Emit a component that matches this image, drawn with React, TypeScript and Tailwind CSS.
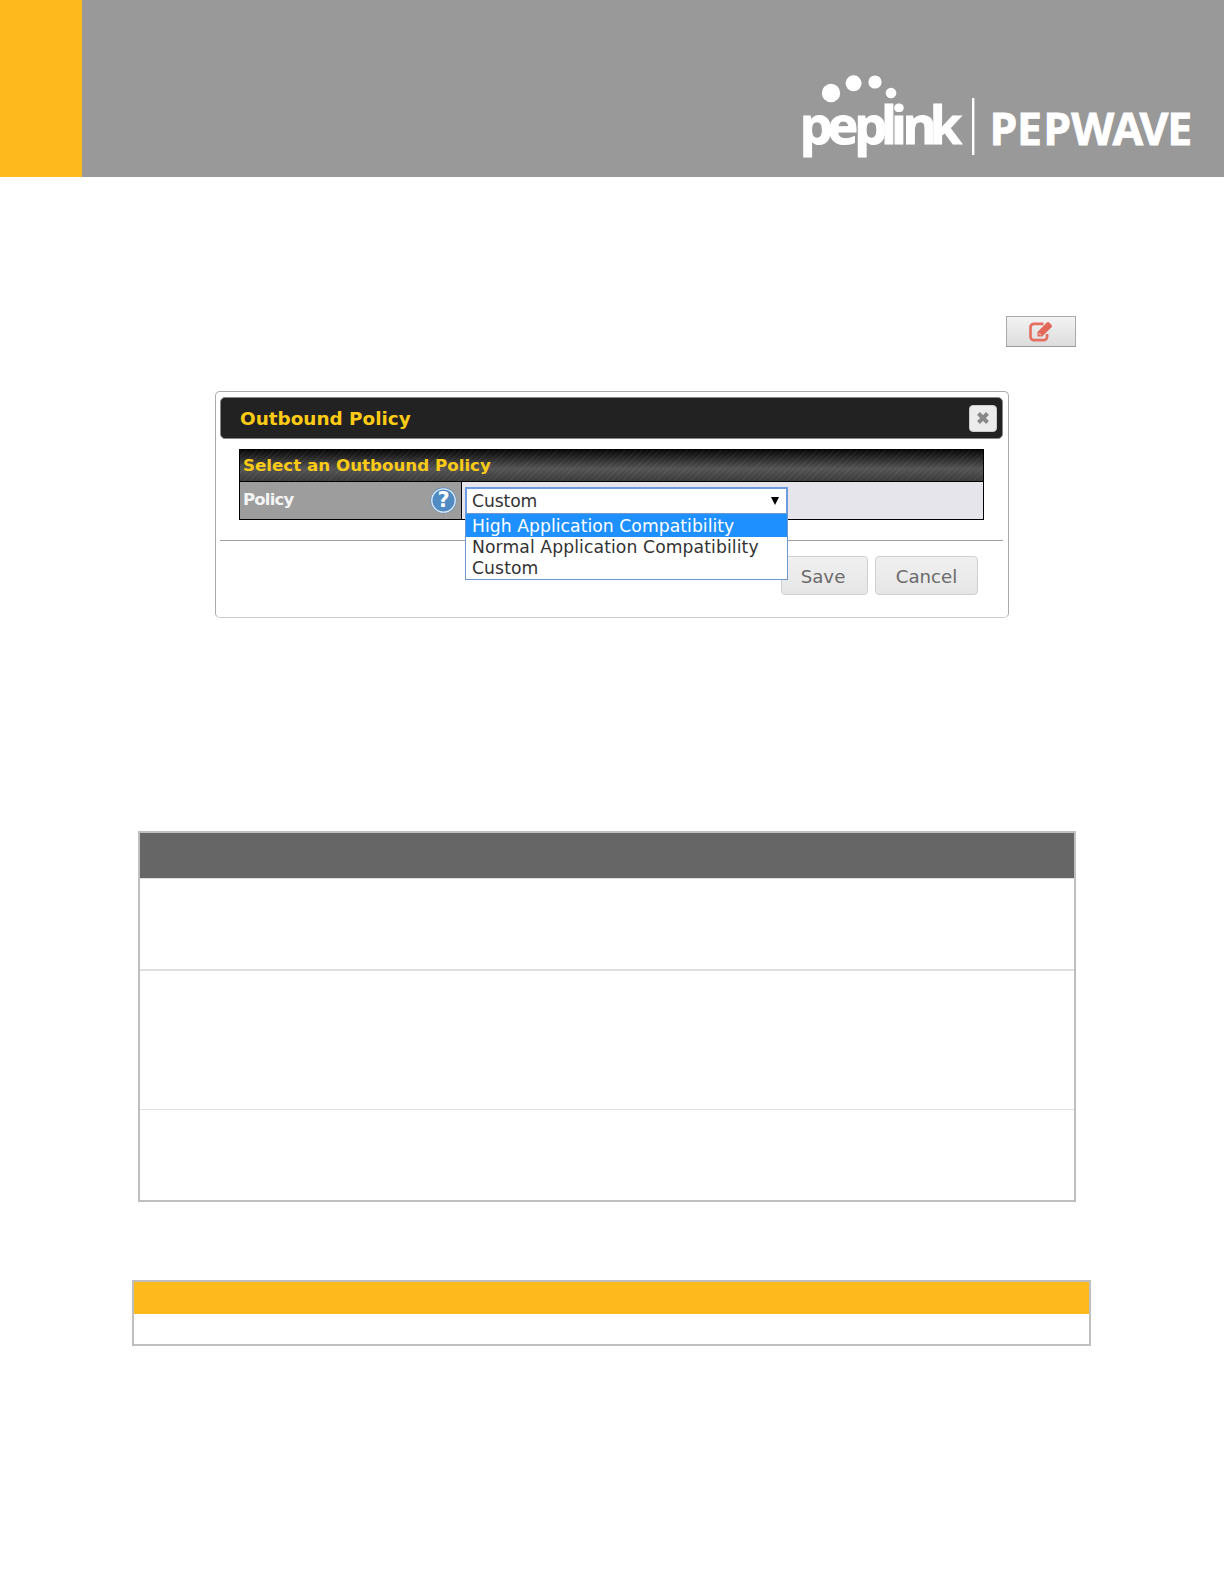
const options = [
  "High Application Compatibility",
  "Normal Application Compatibility",
  "Custom",
]

const Logo = () => (
  <svg className="h-[177px] w-[424px] fill-white" viewBox="800 0 424 177">
    <circle cx="831" cy="93" r="9.2" />
    <circle cx="853.6" cy="83.3" r="8" />
    <circle cx="875" cy="82" r="6.6" />
    <circle cx="891" cy="93" r="5.3" />
    <text
      x="799.8 827.6 854.2 881 891 902.6 929.8"
      y="144"
      fontSize="52"
      fontWeight="700"
      fontFamily="'Open Sans', sans-serif"
      stroke="#fff"
      strokeWidth="1"
    >
      peplink
    </text>
    <rect x="972" y="98" width="2.4" height="57" />
    <text
      x="989.5 1017 1043.3 1071.3 1112.5 1139.5 1167.3"
      y="144.8"
      fontSize="44.5"
      fontWeight="700"
      fontFamily="'Open Sans', sans-serif"
      stroke="#fff"
      strokeWidth="0.8"
    >
      PEPWAVE
    </text>
  </svg>
)

const EditIcon = () => (
  <svg className="h-[22px] w-[26px]" viewBox="0 0 26 22" fill="none">
    <path
      d="M15.5 2.8H6a3.5 3.5 0 0 0-3.5 3.5v9.4A3.5 3.5 0 0 0 6 19.2h9.6a3.5 3.5 0 0 0 3.5-3.5V13"
      stroke="#e56f60"
      strokeWidth="2.7"
    />
    <path
      d="M9.5 15.5v-4.6L18.8 1.6q1.2-1.1 2.4 0l2.3 2.3q1.1 1.2 0 2.4L14.2 15.5z"
      fill="#e2695a"
    />
    <path d="M11 12.2l1.9 1.9" stroke="#f4c1b9" strokeWidth="1.2" />
  </svg>
)

const PageHeader = () => (
  <header className="flex h-[177px] bg-[#999999]">
    <div className="w-[82px] bg-[#feb91d]" />
    <div className="ml-auto">
      <Logo />
    </div>
  </header>
)

const PolicySelect = () => (
  <div className="relative mt-[5px] ml-[3px] h-[28px] w-[323px]">
    <div className="flex h-full items-center justify-between border-2 border-[#6f9be0] bg-white pt-px pr-[7px] pl-[5px] text-[17.2px] tracking-[-0.1px] text-[#333]">
      <span>Custom</span>
      <svg className="mb-[2px] h-[8px] w-[8px]" viewBox="0 0 8 8">
        <path d="M0 0h8L4 8z" fill="#000" />
      </svg>
    </div>
    <ul className="absolute top-[26px] left-0 z-10 w-[323px] border border-[#7297cd] bg-white text-[17.2px] leading-[21px] text-[#333]">
      {options.map((option, i) => (
        <li
          key={option}
          className={
            i === 0
              ? "h-[23px] bg-[#1e90ff] pl-[6px] leading-[24px] tracking-[0.05px] text-white"
              : "h-[21px] pl-[6px] tracking-[0.1px]"
          }
        >
          {option}
        </li>
      ))}
    </ul>
  </div>
)

const OutboundPolicyDialog = () => (
  <div className="mt-[44px] ml-[215px] h-[227px] w-[794px] rounded-[5px] border border-[#aaa] border-b-[#ccc] bg-white py-[5px] pr-[5px] pl-[4px] font-['DejaVu_Sans',sans-serif]">
    <div className="flex h-[42px] items-center justify-between rounded-[5px] border border-[#888] bg-[#222] pr-[5px] pl-[19px]">
      <h2 className="pt-[2px] text-[18.4px] font-bold text-[#fbcb16]">Outbound Policy</h2>
      <button className="flex h-[27px] w-[28px] items-center justify-center rounded-[4px] border border-[#ccc] bg-[#ececec]">
        <svg className="h-[12px] w-[12px]" viewBox="0 0 12 12">
          <path d="M1.5 1.5l9 9M10.5 1.5l-9 9" stroke="#888" strokeWidth="4" />
        </svg>
      </button>
    </div>

    <div className="mt-[10px] mr-[19px] ml-[19px] h-[71px] border border-black">
      <div className="h-[32px] border-b border-black bg-[repeating-linear-gradient(135deg,#ffffff0d_0px,#ffffff0d_1px,transparent_1px,transparent_4px),linear-gradient(to_bottom,#080808,#545454_60%,#3b3b3b)] pl-[3px] text-[16.7px] leading-[30px] font-bold text-[#fbcb16]">
        <span>Select an Outbound Policy</span>
      </div>
      <div className="flex h-[37px]">
        <div className="flex w-[222px] items-center justify-between border-r border-black bg-[#9d9d9d] pr-[4px] pl-[3px]">
          <span className="text-[16.5px] font-bold tracking-[-0.8px] text-[#f4f4f4]">Policy</span>
          <svg className="h-[27px] w-[27px]" viewBox="0 0 27 27">
            <circle cx="13.5" cy="13.5" r="12.9" fill="#518bc4" />
            <circle cx="13.5" cy="13.5" r="11.7" fill="#518bc4" stroke="#e5effa" strokeWidth="1.3" />
            <text x="13.5" y="20.2" fontSize="21" fontWeight="700" textAnchor="middle" fill="#fff">
              ?
            </text>
          </svg>
        </div>
        <div className="flex-1 bg-[#e6e5ec]">
          <PolicySelect />
        </div>
      </div>
    </div>

    <div className="mt-[20px] flex justify-end gap-[7px] border-t border-[#a0a0a0] pt-[15px] pr-[25px] text-[18.2px] text-[#6b6b6b]">
      <button className="h-[39px] w-[87px] rounded-[4px] border border-[#d0d0d0] bg-linear-to-b from-[#f0f0f0] to-[#e6e6e6] pt-[2px] pr-[3px]">
        Save
      </button>
      <button className="h-[39px] w-[103px] rounded-[4px] border border-[#d0d0d0] bg-linear-to-b from-[#f0f0f0] to-[#e6e6e6] pt-[2px]">
        Cancel
      </button>
    </div>
  </div>
)

export default function App() {
  return (
    <div className="h-[1584px] w-[1224px] overflow-hidden bg-white">
      <PageHeader />

      <button className="mt-[139px] ml-[1006px] flex h-[31px] w-[70px] items-center justify-center border border-[#aaa] border-b-[#999] bg-linear-to-b from-[#f3f3f3] to-[#dcdcdc]">
        <EditIcon />
      </button>

      <OutboundPolicyDialog />

      <div className="mt-[213px] ml-[138px] h-[371px] w-[938px] border-2 border-[#bfbfbf]">
        <div className="h-[46px] border-b border-[#dedede] bg-[#666666]" />
        <div className="h-[92px] border-b-2 border-[#dfe1e1]" />
        <div className="h-[139px] border-b border-[#dfe1e1]" />
      </div>

      <div className="mt-[78px] ml-[132px] h-[66px] w-[959px] border-2 border-[#bfbfbf]">
        <div className="h-[32px] bg-[#feb91d]" />
      </div>
    </div>
  )
}
